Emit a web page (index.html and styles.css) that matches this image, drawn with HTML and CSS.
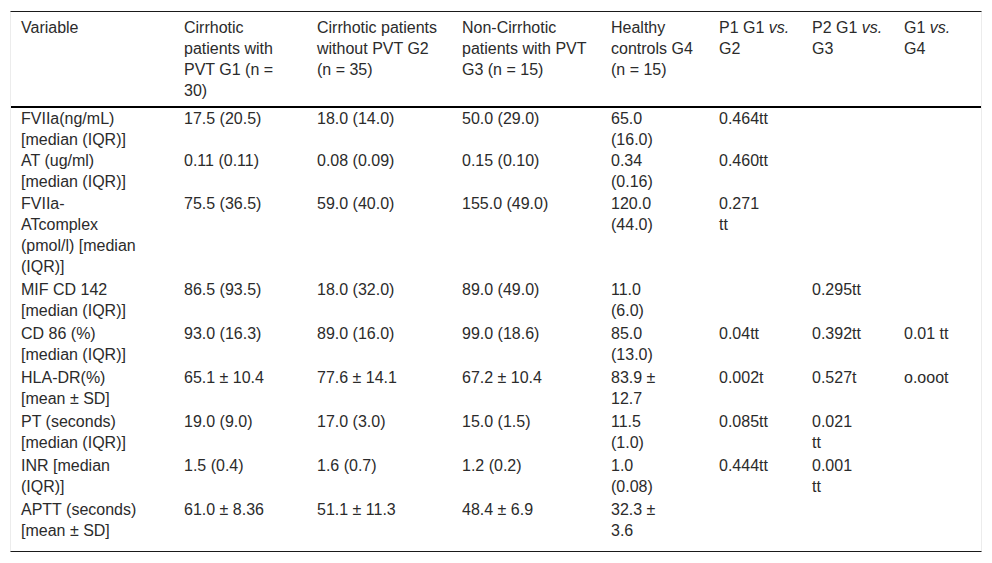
FILE: index.html
```html
<!DOCTYPE html>
<html lang="en">
<head>
<meta charset="utf-8">
<title>Table</title>
<link rel="stylesheet" href="styles.css">
</head>
<body>
<div class="table-wrap">
  <table class="data">
    <colgroup>
      <col class="c1"><col class="c2"><col class="c3"><col class="c4"><col class="c5"><col class="c6"><col class="c7"><col class="c8">
    </colgroup>
    <thead>
      <tr>
        <th>Variable</th>
        <th>Cirrhotic patients with PVT G1 (n = 30)</th>
        <th>Cirrhotic patients without PVT G2 (n = 35)</th>
        <th>Non-Cirrhotic patients with PVT G3 (n = 15)</th>
        <th>Healthy controls G4 (n = 15)</th>
        <th>P1 G1 <i>vs.</i> G2</th>
        <th>P2 G1 <i>vs.</i> G3</th>
        <th>G1 <i>vs.</i> G4</th>
      </tr>
    </thead>
    <tbody>
      <tr class="tight">
        <td>FVIIa(ng/mL) [median (IQR)]</td>
        <td>17.5 (20.5)</td>
        <td>18.0 (14.0)</td>
        <td>50.0 (29.0)</td>
        <td>65.0<br>(16.0)</td>
        <td>0.464tt</td>
        <td></td>
        <td></td>
      </tr>
      <tr class="tight">
        <td>AT (ug/ml) [median (IQR)]</td>
        <td>0.11 (0.11)</td>
        <td>0.08 (0.09)</td>
        <td>0.15 (0.10)</td>
        <td>0.34<br>(0.16)</td>
        <td>0.460tt</td>
        <td></td>
        <td></td>
      </tr>
      <tr>
        <td>FVIIa-ATcomplex (pmol/l) [median (IQR)]</td>
        <td>75.5 (36.5)</td>
        <td>59.0 (40.0)</td>
        <td>155.0 (49.0)</td>
        <td>120.0<br>(44.0)</td>
        <td>0.271<br>tt</td>
        <td></td>
        <td></td>
      </tr>
      <tr>
        <td>MIF CD 142 [median (IQR)]</td>
        <td>86.5 (93.5)</td>
        <td>18.0 (32.0)</td>
        <td>89.0 (49.0)</td>
        <td>11.0<br>(6.0)</td>
        <td></td>
        <td>0.295tt</td>
        <td></td>
      </tr>
      <tr>
        <td>CD 86 (%) [median (IQR)]</td>
        <td>93.0 (16.3)</td>
        <td>89.0 (16.0)</td>
        <td>99.0 (18.6)</td>
        <td>85.0<br>(13.0)</td>
        <td>0.04tt</td>
        <td>0.392tt</td>
        <td>0.01 tt</td>
      </tr>
      <tr>
        <td>HLA-DR(%) [mean ± SD]</td>
        <td>65.1 ± 10.4</td>
        <td>77.6 ± 14.1</td>
        <td>67.2 ± 10.4</td>
        <td>83.9 ±<br>12.7</td>
        <td>0.002t</td>
        <td>0.527t</td>
        <td>o.ooot</td>
      </tr>
      <tr>
        <td>PT (seconds) [median (IQR)]</td>
        <td>19.0 (9.0)</td>
        <td>17.0 (3.0)</td>
        <td>15.0 (1.5)</td>
        <td>11.5<br>(1.0)</td>
        <td>0.085tt</td>
        <td>0.021<br>tt</td>
        <td></td>
      </tr>
      <tr>
        <td>INR [median (IQR)]</td>
        <td>1.5 (0.4)</td>
        <td>1.6 (0.7)</td>
        <td>1.2 (0.2)</td>
        <td>1.0<br>(0.08)</td>
        <td>0.444tt</td>
        <td>0.001<br>tt</td>
        <td></td>
      </tr>
      <tr>
        <td>APTT (seconds) [mean ± SD]</td>
        <td>61.0 ± 8.36</td>
        <td>51.1 ± 11.3</td>
        <td>48.4 ± 6.9</td>
        <td>32.3 ±<br>3.6</td>
        <td></td>
        <td></td>
        <td></td>
      </tr>
    </tbody>
  </table>
</div>
</body>
</html>
```
FILE: styles.css
```css
html, body {
  margin: 0;
  padding: 0;
  background: #ffffff;
}

body {
  font-family: "Liberation Sans", Arial, sans-serif;
  font-size: 16px;
  line-height: 21px;
  color: #2b2b2b;
}

.table-wrap {
  margin: 11px 10px 0 10px;
  border-left: 1px solid #ececec;
  border-right: 1px solid #ececec;
  border-top: 1px solid #1a1a1a;
  border-bottom: 1px solid #1a1a1a;
  padding-bottom: 9px;
}

.data {
  width: 970px;
  table-layout: fixed;
  border-collapse: separate;
  border-spacing: 0;
}

.c1 { width: 163px; }
.c2 { width: 133px; }
.c3 { width: 145px; }
.c4 { width: 149px; }
.c5 { width: 108px; }
.c6 { width: 93px; }
.c7 { width: 92px; }
.c8 { width: 87px; }

.data th,
.data td {
  text-align: left;
  vertical-align: top;
  font-weight: normal;
  padding-left: 10px;
}

.data th {
  padding-top: 5px;
  padding-bottom: 5px;
  border-bottom: 2px solid #000000;
}

.data td {
  padding-top: 1px;
  padding-bottom: 1px;
}

.data .tight td {
  padding-top: 0;
  padding-bottom: 0;
}

.data i {
  font-style: italic;
}

.data th:nth-child(1), .data td:nth-child(1) { padding-right: 34px; }
.data th:nth-child(2), .data td:nth-child(2) { padding-right: 23px; }
.data th:nth-child(3), .data td:nth-child(3) { padding-right: 10px; }
.data th:nth-child(4), .data td:nth-child(4) { padding-right: 7px; }
.data th:nth-child(5), .data td:nth-child(5) { padding-right: 6px; }
.data th:nth-child(6), .data td:nth-child(6) { padding-right: 3px; }
.data th:nth-child(7), .data td:nth-child(7) { padding-right: 2px; }
.data th:nth-child(8), .data td:nth-child(8) { padding-right: 21px; }
```
